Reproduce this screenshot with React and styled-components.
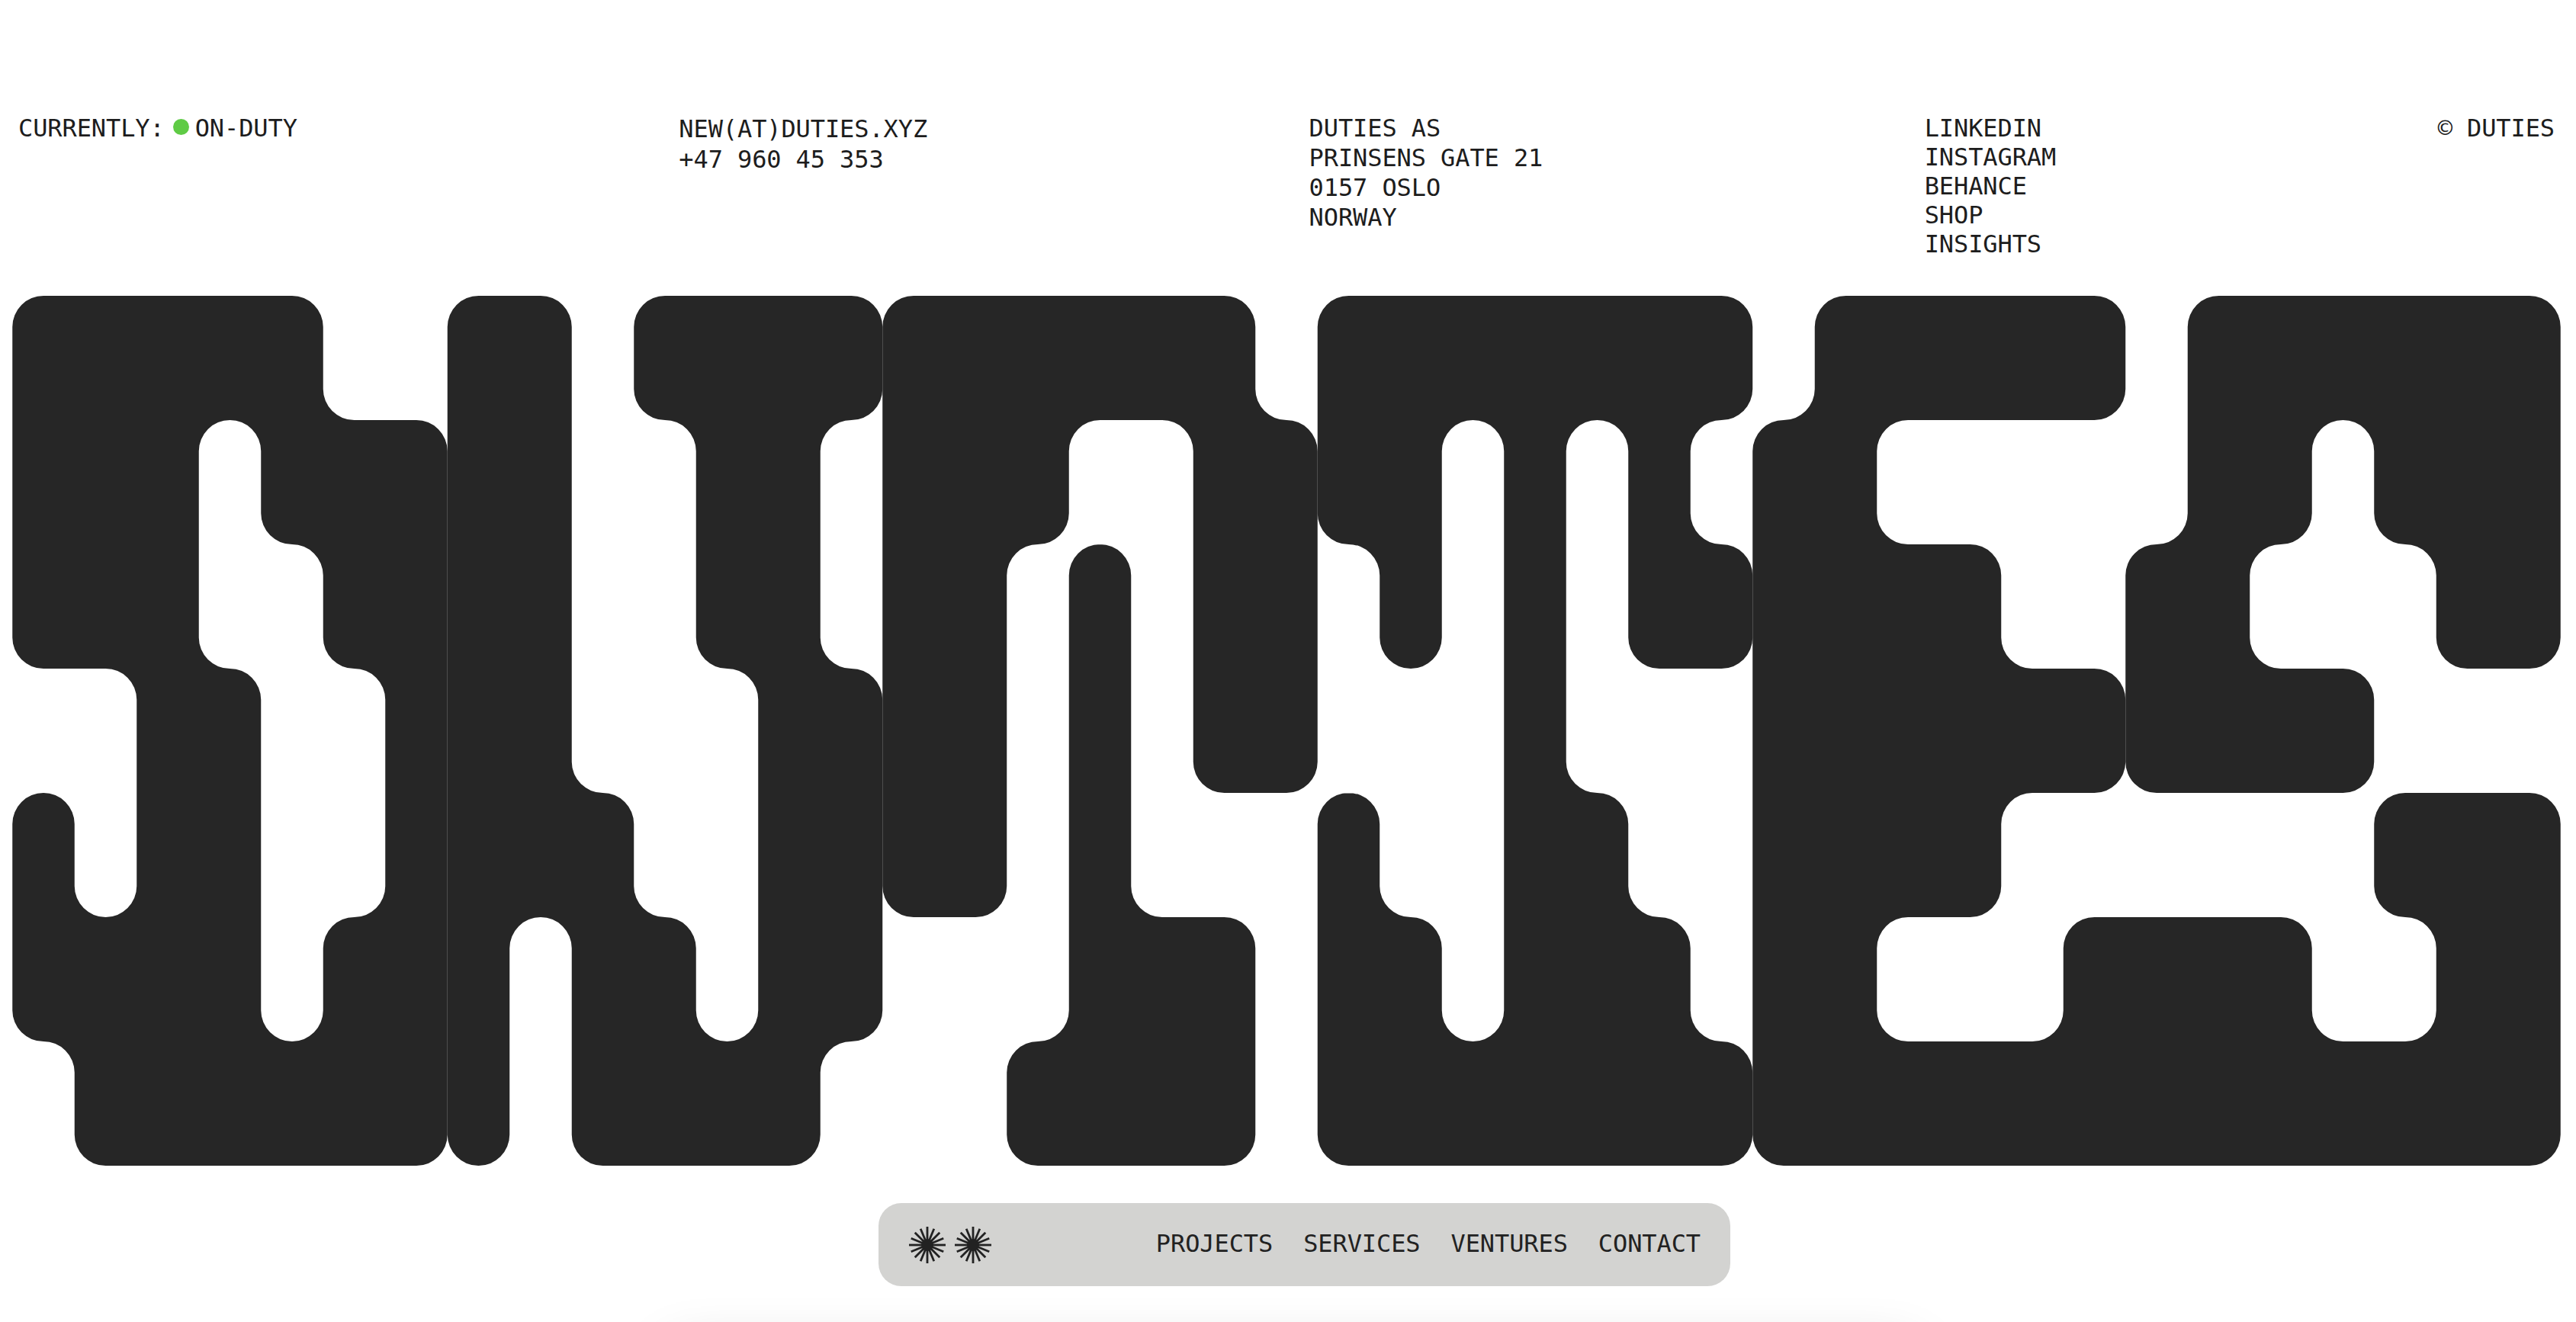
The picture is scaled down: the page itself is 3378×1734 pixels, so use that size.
import React from 'react';
import styled, { createGlobalStyle } from 'styled-components';

// LOGO GRID
const UNIT = 81.51;
const RADIUS = UNIT / 2;

// Every letter piece is an orthogonal polygon on the grid (x in units, y in double units),
// corners get rounded below
const PIECES = [
	[
		[[0, 0], [5, 0], [5, 1], [7, 1], [7, 7], [1, 7], [1, 6], [0, 6], [0, 4], [1, 4], [1, 5], [2, 5], [2, 3], [0, 3]],
		[[3, 1], [4, 1], [4, 2], [5, 2], [5, 3], [6, 3], [6, 5], [5, 5], [5, 6], [4, 6], [4, 3], [3, 3]],
	],
	[
		[[7, 0], [9, 0], [9, 4], [10, 4], [10, 5], [11, 5], [11, 6], [12, 6], [12, 3], [11, 3], [11, 1], [10, 1], [10, 0], [14, 0], [14, 1], [13, 1], [13, 3], [14, 3], [14, 6], [13, 6], [13, 7], [9, 7], [9, 5], [8, 5], [8, 7], [7, 7]],
	],
	[
		[[14, 0], [20, 0], [20, 1], [21, 1], [21, 4], [19, 4], [19, 1], [17, 1], [17, 2], [16, 2], [16, 5], [14, 5]],
	],
	[
		[[17, 2], [18, 2], [18, 5], [20, 5], [20, 7], [16, 7], [16, 6], [17, 6]],
	],
	[
		[[21, 0], [28, 0], [28, 1], [27, 1], [27, 2], [28, 2], [28, 3], [26, 3], [26, 1], [25, 1], [25, 4], [26, 4], [26, 5], [27, 5], [27, 6], [28, 6], [28, 7], [21, 7], [21, 4], [22, 4], [22, 5], [23, 5], [23, 6], [24, 6], [24, 1], [23, 1], [23, 3], [22, 3], [22, 2], [21, 2]],
	],
	[
		[[29, 0], [34, 0], [34, 1], [30, 1], [30, 2], [32, 2], [32, 3], [34, 3], [34, 4], [32, 4], [32, 5], [30, 5], [30, 6], [33, 6], [33, 5], [37, 5], [37, 6], [39, 6], [39, 5], [38, 5], [38, 4], [41, 4], [41, 7], [28, 7], [28, 1], [29, 1]],
	],
	[
		[[35, 0], [41, 0], [41, 3], [39, 3], [39, 2], [38, 2], [38, 1], [37, 1], [37, 2], [36, 2], [36, 3], [38, 3], [38, 4], [34, 4], [34, 2], [35, 2]],
	],
];

const roundedPath = (points) => {
	const n = points.length;
	let d = '';
	points.forEach((p, i) => {
		const prev = points[(i - 1 + n) % n];
		const next = points[(i + 1) % n];
		const x = p[0] * UNIT;
		const y = p[1] * UNIT * 2;
		const inX = Math.sign(p[0] - prev[0]);
		const inY = Math.sign(p[1] - prev[1]);
		const outX = Math.sign(next[0] - p[0]);
		const outY = Math.sign(next[1] - p[1]);
		const sweep = inX * outY - inY * outX > 0 ? 1 : 0;
		const sx = x - inX * RADIUS;
		const sy = y - inY * RADIUS;
		const ex = x + outX * RADIUS;
		const ey = y + outY * RADIUS;
		d += `${i === 0 ? 'M' : 'L'}${sx.toFixed(2)} ${sy.toFixed(2)}A${RADIUS.toFixed(2)} ${RADIUS.toFixed(2)} 0 0 ${sweep} ${ex.toFixed(2)} ${ey.toFixed(2)}`;
	});
	return d + 'Z';
};

const Logo = () => (
	<LogoSvg viewBox={`0 0 ${41 * UNIT} ${14 * UNIT}`} role='img' aria-label='Duties'>
		{PIECES.map((rings, i) => (
			<path key={i} fillRule='evenodd' fill='#262626' d={rings.map(roundedPath).join('')} />
		))}
	</LogoSvg>
);

const SPOKES = Array.from({ length: 16 }, (_, i) => i * 22.5);

const Star = () => (
	<svg width='50' height='50' viewBox='-25 -25 50 50' aria-hidden='true'>
		{SPOKES.map((deg) => (
			<line key={deg} x1='0' y1='0' x2='0' y2={deg % 90 === 0 ? -24 : -23} stroke='#222' strokeWidth='2.8' transform={`rotate(${deg})`} />
		))}
		<circle r='8' fill='#222' />
	</svg>
);

const App = () => (
	<>
		<GlobalStyle />
		<Page>
			<Header>
				<Status>
					CURRENTLY:
					<Dot />
					ON-DUTY
				</Status>
				<Column $leading={40}>
					<div>NEW(AT)DUTIES.XYZ</div>
					<div>+47 960 45 353</div>
				</Column>
				<Column $leading={39}>
					<div>DUTIES AS</div>
					<div>PRINSENS GATE 21</div>
					<div>0157 OSLO</div>
					<div>NORWAY</div>
				</Column>
				<Column $leading={38}>
					<div>LINKEDIN</div>
					<div>INSTAGRAM</div>
					<div>BEHANCE</div>
					<div>SHOP</div>
					<div>INSIGHTS</div>
				</Column>
				<Column $leading={39}>
					<div>© DUTIES</div>
				</Column>
			</Header>
			<Logo />
			<Nav>
				<Stars>
					<Star />
					<Star />
				</Stars>
				<NavLinks>
					<span>PROJECTS</span>
					<span>SERVICES</span>
					<span>VENTURES</span>
					<span>CONTACT</span>
				</NavLinks>
			</Nav>
			<BottomGlow />
		</Page>
	</>
);

const GlobalStyle = createGlobalStyle`
	html, body {
		margin: 0;
		padding: 0;
		background: #fff;
	}
`;

const mono = `
	font-family: 'DejaVu Sans Mono', monospace;
	font-size: 32px;
	letter-spacing: -0.1px;
	color: #1d1d1d;
	white-space: nowrap;
`;

const Page = styled.div`
	position: relative;
	width: 3378px;
	height: 1734px;
	padding-top: 149px;
	box-sizing: border-box;
	overflow: hidden;
	background: #fff;
`;

const Header = styled.header`
	${mono}
	display: flex;
	justify-content: space-between;
	align-items: flex-start;
	height: 239px;
	padding: 0 28px 0 24px;
`;

const Column = styled.div`
	line-height: ${(p) => p.$leading}px;
`;

const Status = styled.div`
	display: flex;
	align-items: center;
	line-height: 39px;
`;

const Dot = styled.span`
	width: 21px;
	height: 21px;
	margin: 0 8px 4px 11px;
	border-radius: 50%;
	background: #5fcb45;
`;

const LogoSvg = styled.svg`
	display: block;
	width: 3342px;
	height: 1141px;
	margin-left: 16px;
`;

const Nav = styled.nav`
	${mono}
	display: flex;
	justify-content: space-between;
	align-items: center;
	box-sizing: border-box;
	width: 1117px;
	height: 109px;
	margin: 49px 0 0 1152px;
	padding: 0 39px 0 39px;
	border-radius: 30px;
	background: #d3d3d1;
	color: #222;
`;

const Stars = styled.div`
	display: flex;
	gap: 10px;
`;

const NavLinks = styled.div`
	display: flex;
	gap: 40px;
	padding-bottom: 3px;
`;

const BottomGlow = styled.div`
	position: absolute;
	left: 880px;
	top: 1775px;
	width: 1630px;
	height: 300px;
	background: #fff;
	box-shadow: 0 0 70px rgba(0, 0, 0, 0.2);
`;

export default App;
